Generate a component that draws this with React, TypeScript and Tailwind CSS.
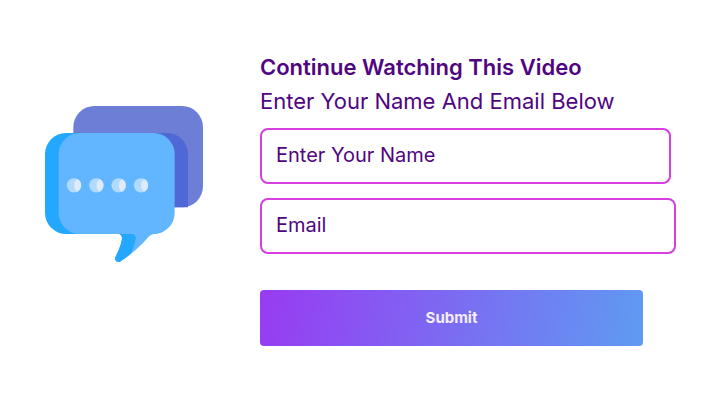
function ChatIcon() {
  return (
    <svg viewBox="30 33 474 468" className="mt-14 w-[158px] shrink-0" role="img" aria-label="Chat bubbles">
      <path d="M178 33H441A63 63 0 0 1 504 96V274A63 63 0 0 1 441 337H178A63 63 0 0 1 115 274V96A63 63 0 0 1 178 33Z" fill="#6d7ed6" />
      <path d="M350 114H396A63 63 0 0 1 459 177V337H350Z" fill="#4f68d5" />
      <path d="M93 114H200V417H93A63 63 0 0 1 30 354V177A63 63 0 0 1 93 114Z" fill="#23a7ff" />
      <path d="M134 114H356A63 63 0 0 1 419 177V354A63 63 0 0 1 356 417Q347 418 340 426Q311 462 258 498C249 505 237 497 241 487Q261 446 261 428Q261 420 253 417H134A63 63 0 0 1 71 354V177A63 63 0 0 1 134 114Z" fill="#61b6ff" />
      <path d="M253 417H292Q304 420 302 433Q297 457 289 475Q274 488 258 498C249 505 237 497 241 487Q261 446 261 428Q261 420 253 417Z" fill="#23a7ff" />
      {[117, 184, 251, 318].map((x) => (
        <g key={x} transform={`translate(${x} 271)`}>
          <circle r="21.5" fill="#b1daff" />
          <path d="M10 -19A21.5 21.5 0 0 1 10 19C-3 11 -3 -11 10 -19Z" fill="#dfeafb" />
        </g>
      ))}
    </svg>
  );
}

const field =
  "block h-14 w-full rounded-lg border-2 border-[#d63fe0] bg-white px-3.5 pb-0.5 text-xl text-[#4f0680] placeholder:text-[#4f0680] placeholder:opacity-100";

export default function App() {
  return (
    <main className="flex items-start gap-[57px] bg-white pt-[50px] pr-[31px] pb-14 pl-[45px] font-['Inter','Liberation_Sans',sans-serif] text-[#4f0680]">
      <ChatIcon />
      <form className="min-w-0 flex-1" onSubmit={(e) => e.preventDefault()}>
        <h1 className="text-[22px] leading-[34px] font-semibold whitespace-nowrap">Continue Watching This Video</h1>
        <p className="mb-2.5 text-[22px] leading-[34px] font-normal whitespace-nowrap">Enter Your Name And Email Below</p>
        <div className="mb-3.5 pr-[5px]">
          <input type="text" aria-label="Enter Your Name" placeholder="Enter Your Name" className={field} />
        </div>
        <div className="mb-9">
          <input type="email" aria-label="Email" placeholder="Email" className={field} />
        </div>
        <div className="pr-[33px]">
          <button type="submit" className="h-14 w-full rounded bg-linear-[100deg,#983bf2,#5f9bf2] text-[15px] font-bold text-[#f4eeff]">
            Submit
          </button>
        </div>
      </form>
    </main>
  );
}
